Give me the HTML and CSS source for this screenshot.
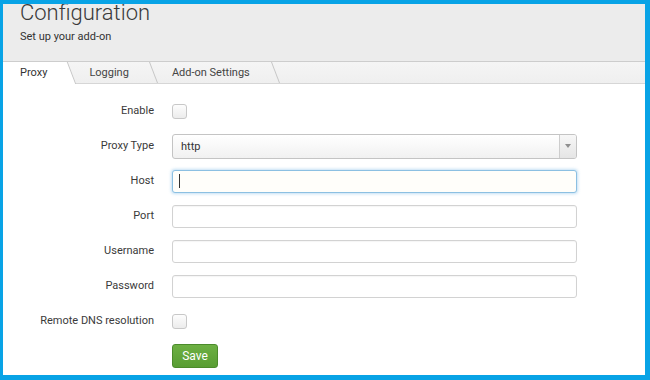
FILE: index.html
```html
<!DOCTYPE html>
<html lang="en">
<head>
<meta charset="utf-8">
<title>Configuration</title>
<link rel="stylesheet" href="styles.css">
</head>
<body>
<div class="frame">
  <header class="page-head">
    <h1 class="title">Configuration</h1>
    <p class="subtitle">Set up your add-on</p>
  </header>
  <nav class="tabs">
    <a class="tab active">Proxy</a>
    <a class="tab">Logging</a>
    <a class="tab">Add-on Settings</a>
  </nav>
  <form class="form">
    <label class="label">Enable</label>
    <div class="ctl"><span class="checkbox"></span></div>

    <label class="label">Proxy Type</label>
    <div class="ctl">
      <div class="select">
        <span class="select-value">http</span>
        <span class="select-arrow"><svg width="6" height="4" viewBox="0 0 6 4"><path d="M0 0H6L3 4Z" fill="#8f8f8f"/></svg></span>
      </div>
    </div>

    <label class="label">Host</label>
    <div class="ctl"><div class="field focused"><span class="caret"></span></div></div>

    <label class="label">Port</label>
    <div class="ctl"><div class="field"></div></div>

    <label class="label">Username</label>
    <div class="ctl"><div class="field"></div></div>

    <label class="label">Password</label>
    <div class="ctl"><div class="field"></div></div>

    <label class="label">Remote DNS resolution</label>
    <div class="ctl"><span class="checkbox"></span></div>

    <span></span>
    <div class="ctl"><button type="button" class="btn-save">Save</button></div>
  </form>
</div>
</body>
</html>
```

FILE: styles.css
```css
* { box-sizing: border-box; }
html, body { margin: 0; padding: 0; }
body {
  font-family: Roboto, "Liberation Sans", Arial, sans-serif;
  color: #333;
  background: #fff;
}
.frame {
  width: 650px;
  height: 380px;
  border-style: solid;
  border-color: #08a3e6;
  border-width: 4px 5px 5px 3px;
  overflow: hidden;
  background: #fff;
}
.page-head {
  height: 57px;
  background: #ececec;
  padding: 0 0 0 17px;
}
.title {
  margin: 0;
  font-size: 22px;
  font-weight: 300;
  line-height: 20px;
  color: #3a3a3a;
  position: relative;
  top: -1px;
}
.subtitle {
  margin: 6px 0 0;
  font-size: 11px;
  line-height: 14px;
  color: #333;
}
.tabs {
  display: flex;
  align-items: flex-start;
  height: 23px;
  border-top: 1px solid #cdcdcd;
  border-bottom: 1px solid #d6d6d6;
  background: linear-gradient(#f5f5f5, #efefef);
}
.tab {
  position: relative;
  z-index: 0;
  display: block;
  height: 21px;
  line-height: 21px;
  padding: 0 26px 0 17px;
  font-size: 11px;
  color: #444;
  text-decoration: none;
}
.tab::before {
  content: "";
  position: absolute;
  z-index: -1;
  top: 0;
  bottom: 0;
  left: -16px;
  right: 0;
  transform: skewX(21deg);
  border-right: 1px solid #c6c6c6;
}
.tab.active {
  height: 22px;
  margin-bottom: -1px;
  color: #333;
  padding-right: 25px;
}
.tab.active::before {
  background: #fff;
}
.form {
  display: grid;
  grid-template-columns: 151px 405px;
  grid-auto-rows: 24px;
  column-gap: 18px;
  row-gap: 11px;
  align-items: center;
  padding-top: 15px;
  margin: 0;
}
.label {
  text-align: right;
  font-size: 11px;
  line-height: 14px;
  color: #3a3a3a;
}
.ctl {
  display: flex;
  align-items: center;
}
.checkbox {
  display: block;
  width: 15px;
  height: 15px;
  border: 1px solid #c8c8c8;
  border-radius: 3px;
  background: linear-gradient(#fdfdfd, #ececec);
}
.select {
  display: flex;
  width: 405px;
  height: 25px;
  border: 1px solid #c4c4c4;
  border-radius: 3px;
  background: linear-gradient(#ffffff, #f1f1f1);
  overflow: hidden;
}
.select-value {
  flex: 1;
  padding-left: 8px;
  font-size: 11px;
  line-height: 23px;
  color: #333;
}
.select-arrow {
  display: flex;
  align-items: center;
  justify-content: center;
  width: 17px;
  border-left: 1px solid #cdcdcd;
  background: linear-gradient(#f7f7f7, #e5e5e5);
}
.field {
  display: flex;
  align-items: center;
  width: 405px;
  height: 23px;
  border: 1px solid #d2d2d2;
  border-radius: 3px;
  background: #fff;
  box-shadow: inset 0 1px 1px rgba(0, 0, 0, 0.04);
  padding-left: 6px;
}
.field.focused {
  border-color: #8cc0e2;
  background: #fffefa;
  box-shadow: 0 0 3px 1px rgba(120, 185, 230, 0.45);
}
.caret {
  display: block;
  width: 1px;
  height: 14px;
  background: #333;
}
.btn-save {
  width: 46px;
  height: 24px;
  padding: 0;
  border: 1px solid #4b8b2b;
  border-radius: 3px;
  background: linear-gradient(#6db043, #589d33);
  color: #fff;
  font-family: Roboto, "Liberation Sans", Arial, sans-serif;
  font-size: 12px;
  line-height: 22px;
  text-align: center;
}
```
